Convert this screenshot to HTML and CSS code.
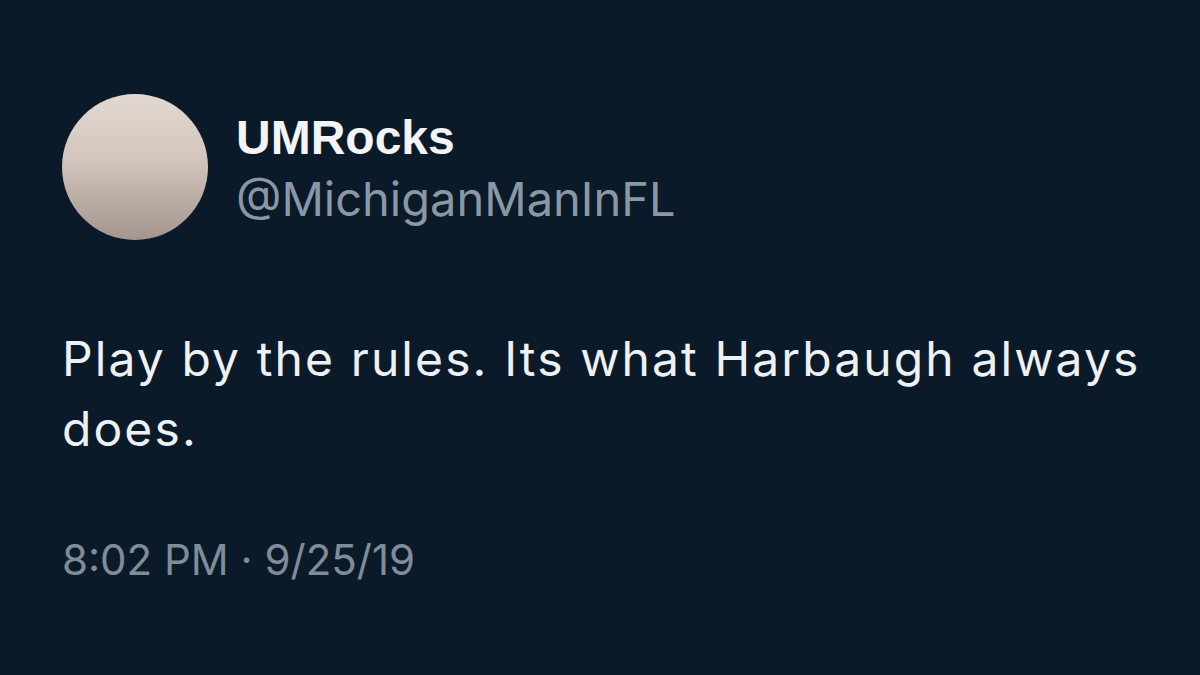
FILE: index.html
```html
<!DOCTYPE html>
<html>
<head>
<meta charset="utf-8">
<link rel="stylesheet" href="styles.css">
</head>
<body>
<main class="tweet">
  <header class="author">
    <div class="avatar"></div>
    <div class="names">
      <div class="name">UMRocks</div>
      <div class="handle">@MichiganManInFL</div>
    </div>
  </header>
  <p class="text">Play by the rules. Its what Harbaugh always does.</p>
  <div class="meta">8:02 PM · 9/25/19</div>
</main>
</body>
</html>
```
FILE: styles.css
```css
html, body {
  margin: 0;
  padding: 0;
  background: #0b1a29;
  width: 1200px;
  height: 675px;
  overflow: hidden;
}
.tweet {
  padding: 94px 40px 0 62px;
  font-family: Inter, "Liberation Sans", Arial, sans-serif;
  color: #eef1f4;
}
.author {
  display: flex;
  align-items: flex-start;
}
.avatar {
  width: 146px;
  height: 146px;
  border-radius: 50%;
  background: linear-gradient(180deg, #e3d8d1 0%, #d2c5bd 45%, #a4958f 100%);
  flex: none;
}
.names {
  margin-left: 28px;
  padding-top: 13px;
}
.name {
  font-family: "Liberation Sans", Arial, sans-serif;
  font-size: 48px;
  font-weight: 700;
  line-height: 61px;
  color: #f2f4f7;
}
.handle {
  font-size: 47px;
  line-height: 61px;
  color: #8a97a5;
}
.text {
  margin: 0;
  margin-top: 84px;
  font-size: 48px;
  letter-spacing: 2.1px;
  line-height: 70px;
  width: 1120px;
  color: #eef1f4;
}
.meta {
  margin-top: 66px;
  font-size: 42px;
  line-height: 60px;
  color: #7f8c99;
}
```
